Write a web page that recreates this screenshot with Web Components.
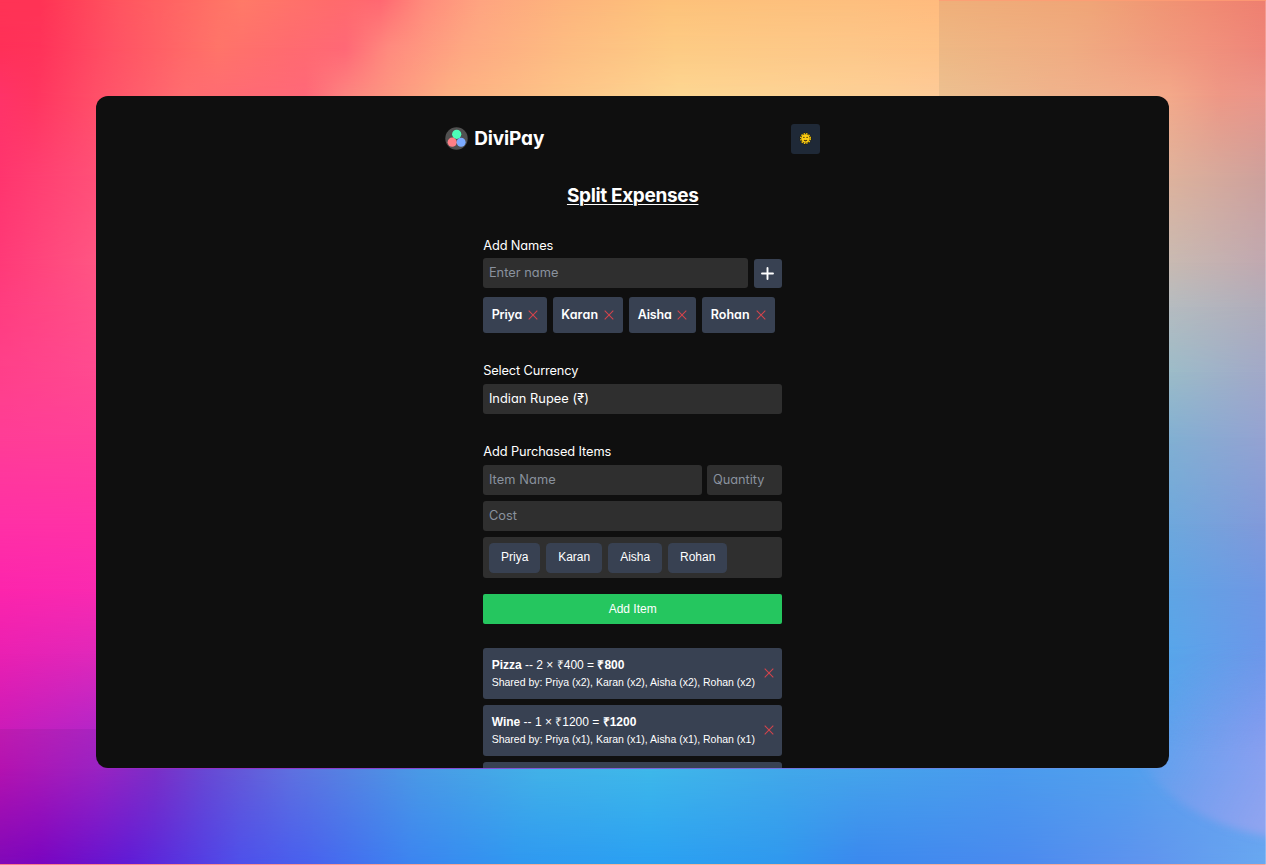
<!DOCTYPE html>
<html lang="en">
<head>
<meta charset="utf-8">
<title>DiviPay</title>
<style>
html,body{margin:0;width:1266px;height:865px;overflow:hidden}
body{font-family:"Liberation Sans",Arial,sans-serif;color:#fff}
</style>
</head>
<body>
<divi-stage>
  <divi-panel>
    <divi-header></divi-header>
    <divi-title><fit-text w="131.5">Split Expenses</fit-text></divi-title>
    <divi-form></divi-form>
  </divi-panel>
</divi-stage>
<script>
const define = (name, html, setup) => {
  const t = document.createElement('template');
  t.innerHTML = html;
  customElements.define(name, class extends HTMLElement {
    constructor() {
      super();
      this.attachShadow({mode: 'open'}).append(t.content.cloneNode(true));
    }
    connectedCallback() { if (setup) setup(this, this.shadowRoot); }
  });
};

define('divi-cross', `<style>:host{display:block;width:10px;height:10px;flex:none}svg{display:block}</style>
<svg width="10" height="10" viewBox="0 0 10 10"><path d="M.7.7l8.6 8.6M9.3.7L.7 9.3" stroke="#d4444c" stroke-width="1.05" fill="none"/></svg>`);

// Wallpaper: bands blended between the colour rows above and below them.
const top0 = '#ff3355 0,#ff3355 40px,#ff5560 120px,#ff7a68 242px,#ff6c6c 330px,#ff6872 380px,#ff8c7c 425px,#fea480 480px,#fdb47c 565px,#fdc27a 670px,#fdbf7e 850px,#ffbb7e 939px,#f0b07a 939px,#f0a577 1090px,#f18a72 1211px,#ef7f70 1266px';
const top48 = '#ff3058 0,#ff335a 40px,#ff5064 110px,#ff7469 218px,#ff6b70 290px,#ff6876 345px,#ff8a7e 388px,#fea882 465px,#fdbc82 565px,#fdcb84 675px,#fdc789 850px,#fec388 939px,#eeb884 939px,#f0ac82 1070px,#f1927c 1205px,#ee857a 1266px';
const top96 = '#ff3368 0,#ff3560 35px,#ff4f68 96px,#ff6d70 185px,#ff6878 305px,#fd8480 345px,#fdb083 450px,#fdc488 560px,#fdd692 680px,#fdd096 860px,#fdca98 939px,#ecc090 939px,#efb38c 1050px,#f3a98a 1169px,#ee9886 1220px,#ea958a 1266px';
const low0 = '#b412b0 0,#9a22c2 96px,#7c2ec8 155px,#6848d4 205px,#5f70e0 290px,#4a9ae6 420px,#42b2e8 540px,#3eb8ea 650px,#42a8ea 790px,#4a9bee 1000px,#52a0ee 1130px,#5ba2ee 1169px,#6a9ff0 1266px';
const low1 = '#8008b8 0,#7a05c0 40px,#5f1cd6 130px,#4e50ea 240px,#4862ee 310px,#3c84f0 410px,#2f98f0 520px,#2aa0f2 650px,#2f98ee 780px,#3b88ee 860px,#4b8aee 1020px,#6094ee 1150px,#68a8f0 1266px';
const mid = (a, b, c, d) => `${a} 0,${b} 96px,${c} 1169px,${d} 1266px`;
const bands = [
  [48, top0, top48],
  [48, top48, top96],
  [81, '#ff3368 0,#ff3560 35px,#ff4f68 96px,#f3a98a 1169px,#ee9886 1220px,#ea958a 1266px', mid('#ff356e','#ff5078','#deb29c','#cda09c')],
  [86, mid('#ff356e','#ff5078','#deb29c','#cda09c'), mid('#ff3a78','#ff5583','#c8bab2','#c0a8b0')],
  [44, mid('#ff3a78','#ff5583','#c8bab2','#c0a8b0'), mid('#ff3d80','#ff5088','#b5bcc0','#b0acba')],
  [65, mid('#ff3d80','#ff5088','#b5bcc0','#b0acba'), mid('#ff408a','#ff4a90','#9cbcc8','#a2a8c8')],
  [65, mid('#ff408a','#ff4a90','#9cbcc8','#a2a8c8'), mid('#ff3d96','#ff4098','#82b0d2','#95a2d2')],
  [87, mid('#ff3d96','#ff4098','#82b0d2','#95a2d2'), mid('#ff30a6','#ff32a6','#6ea8dc','#8299da')],
  [65, mid('#ff30a6','#ff32a6','#6ea8dc','#8299da'), mid('#fd25ac','#fa2ab0','#5fa5e4','#7097e4')],
  [65, mid('#fd25ac','#fa2ab0','#5fa5e4','#7097e4'), mid('#ea20b2','#e028ba','#58a6ea','#6c97ea')],
  [75, mid('#ea20b2','#e028ba','#58a6ea','#6c97ea'), mid('#cc1bb8','#b526c8','#5ba2ec','#7099ee')],
  [40, mid('#bf1bb0','#a924c0','#5ba2ec','#7099ee'), mid('#b412b0','#9a22c2','#5ba2ee','#6a9ff0')],
  [95, low0, low1]
];
define('divi-wallpaper', `<style>
:host{display:block;width:1266px;height:865px}
.band{display:grid}
.band i{grid-area:1/1;display:block}
.band i+i{-webkit-mask:linear-gradient(transparent,#000);mask:linear-gradient(transparent,#000)}
.foot{height:1px;background:linear-gradient(90deg,#f8788c,#f6b59a 50%,#f5a49a)}
svg{position:absolute;left:0;top:0}
</style><div class="bands"></div><div class="foot"></div>
<svg width="1266" height="865" viewBox="0 0 1266 865">
<defs><linearGradient id="g" gradientUnits="userSpaceOnUse" x1="1150" y1="725" x2="1275" y2="795"><stop offset="0" stop-color="#a09cf0" stop-opacity="0.04"/><stop offset="1" stop-color="#a8a4f0" stop-opacity=".6"/></linearGradient>
<linearGradient id="v" x1="0" y1="0" x2="0" y2="1"><stop offset="0" stop-color="#000"/><stop offset=".5" stop-color="#fff"/></linearGradient>
<mask id="m"><rect x="1100" y="640" width="166" height="225" fill="url(#v)"/></mask>
<filter id="b" x="-20%" y="-20%" width="140%" height="140%"><feGaussianBlur stdDeviation="4"/></filter></defs>
<g mask="url(#m)"><path d="M1300 640H1130V740Q1165 818 1266 836L1300 840Z" fill="url(#g)" filter="url(#b)"/></g>
<rect x="1265" width="1" height="865" fill="#fff" opacity=".22"/>
<rect x="939" width="327" height="1" fill="#ff9c74" opacity=".8"/>
</svg>`, (el, root) => {
  const box = root.querySelector('.bands');
  for (const [h, a, b] of bands) {
    const d = document.createElement('div');
    d.className = 'band';
    d.style.height = h + 'px';
    for (const c of [a, b]) {
      const i = document.createElement('i');
      i.style.background = `linear-gradient(90deg,${c})`;
      d.append(i);
    }
    box.append(d);
  }
});

define('divi-stage', `<style>
:host{display:grid;width:1266px;height:865px;overflow:hidden;position:relative}
divi-wallpaper{grid-area:1/1}
.content{grid-area:1/1;padding:96px;z-index:1}
</style><divi-wallpaper></divi-wallpaper><div class="content"><slot></slot></div>`);

define('divi-panel', `<style>
:host{display:flex;flex-direction:column;align-items:center;box-sizing:border-box;width:1073.4px;height:672.4px;padding-top:27.6px;background:#0f0f0f;border-radius:12px;overflow:hidden}
</style><slot></slot>`);

define('divi-header', `<style>
:host{display:flex;align-items:center;justify-content:space-between;width:375px;height:30px}
.brand{display:flex;align-items:center;gap:6px;font-size:19px;font-weight:700;line-height:30px}
svg{display:block}
button{all:unset;display:grid;place-items:center;width:29px;height:30px;border-radius:3px;background:#1f2937}
</style>
<div class="brand"><svg width="23" height="23" viewBox="0 0 23 23"><circle cx="11.5" cy="11.5" r="11.2" fill="#505050"/><circle cx="11.7" cy="7.3" r="4.6" fill="#4dffb8"/><circle cx="7.2" cy="15.2" r="4.6" fill="#ff7f86"/><circle cx="16.1" cy="15.2" r="4.5" fill="#7baaff"/></svg>
<fit-text w="70">DiviPay</fit-text></div>
<button aria-label="Toggle theme"><svg width="13" height="13" viewBox="0 0 13 13"><circle cx="6.5" cy="6.5" r="4.9" fill="none" stroke="#211b05" stroke-width="2.2" stroke-dasharray="1.55 1"/><circle cx="6.5" cy="6.5" r="4.8" fill="none" stroke="#f6c90e" stroke-width="1.4" stroke-dasharray="1.5 1.013"/><circle cx="6.5" cy="6.5" r="4.2" fill="#fccb12"/><circle cx="4.9" cy="5.4" r=".7" fill="#40300a"/><circle cx="8.1" cy="5.4" r=".7" fill="#40300a"/><path d="M5 8.2q1.5 1.3 3 0" stroke="#40300a" stroke-width="1.1" fill="none"/></svg></button>`);

define('divi-title', `<style>
:host{display:block;margin-top:28px;height:28px;line-height:28px;font-size:19px;font-weight:700}
::slotted(*){text-decoration:underline;text-decoration-thickness:1.4px;text-underline-offset:1.5px}
</style><slot></slot>`);

define('divi-label', `<style>
:host{display:block;height:20px;line-height:20px;font-size:12.8px;margin-bottom:2.5px}
</style><slot></slot>`);

define('divi-field', `<style>
:host{display:block;box-sizing:border-box;height:30px;padding-left:5.7px;line-height:29px;font-size:12.8px;color:#8a929e;background:#2f2f2f;border-radius:3px}
:host([filled]){color:#fff}
</style><slot></slot>`);

define('divi-name', `<style>
:host{display:flex;align-items:center;justify-content:space-between;box-sizing:border-box;height:36px;padding:0 9px 0 8.5px;background:#384152;border-radius:3px;font-size:12.5px;font-weight:600}
</style><slot></slot><divi-cross></divi-cross>`);

define('divi-person', `<style>
:host{display:block;box-sizing:border-box;height:30px;line-height:29px;text-align:center;font-size:12px;background:#384152;border-radius:4.5px}
</style><slot></slot>`);

define('divi-item', `<style>
:host{display:flex;align-items:center;justify-content:space-between;box-sizing:border-box;height:51px;padding:0 8.6px 0 8.5px;background:#384152;border-radius:3px;white-space:nowrap}
.line{font-size:12px;line-height:18px;height:18px}
.by{font-size:10.5px;line-height:16px;letter-spacing:-.01px}
</style><div><div class="line"><slot></slot></div><div class="by"><slot name="by"></slot></div></div><divi-cross></divi-cross>`);

define('divi-form', `<style>
:host{display:block;width:299px;margin-top:26.4px;flex:none}
.row{display:flex;align-items:center;gap:6px}
.plus{all:unset;width:28.5px;height:29px;border-radius:3px;background:#384152;display:grid;place-items:center}
.names{margin:8.5px 0 28.5px}
.group{margin-bottom:28.5px}
.people{box-sizing:border-box;height:41.5px;padding:6px;align-items:flex-start;background:#2f2f2f;border-radius:3px}
.stack{display:grid;gap:6px}
.add{all:unset;display:block;width:299px;height:30px;margin:15.7px 0 23.6px;line-height:28px;text-align:center;font-size:12px;background:#25c65f;border-radius:2px}
</style>
<divi-label><fit-text w="70">Add Names</fit-text></divi-label>
<div class="row"><divi-field style="width:265px"><fit-text w="69.5">Enter name</fit-text></divi-field>
<button class="plus" aria-label="Add name"><svg width="13" height="13" viewBox="0 0 13 13"><path d="M6.5 1v11M1 6.5h11" stroke="#fff" stroke-width="1.9" stroke-linecap="round"/></svg></button></div>
<div class="row names">
<divi-name style="width:63.5px"><fit-text w="30.5">Priya</fit-text></divi-name>
<divi-name style="width:70.5px"><fit-text w="37">Karan</fit-text></divi-name>
<divi-name style="width:67px"><fit-text w="34">Aisha</fit-text></divi-name>
<divi-name style="width:73px"><fit-text w="39">Rohan</fit-text></divi-name></div>
<div class="group"><divi-label><fit-text w="95">Select Currency</fit-text></divi-label>
<divi-field filled><fit-text w="100">Indian Rupee (₹)</fit-text></divi-field></div>
<divi-label><fit-text w="128">Add Purchased Items</fit-text></divi-label>
<div class="stack">
<div class="row" style="gap:5px"><divi-field style="width:219px"><fit-text w="67">Item Name</fit-text></divi-field><divi-field style="width:75px"><fit-text w="51.5">Quantity</fit-text></divi-field></div>
<divi-field><fit-text w="28">Cost</fit-text></divi-field>
<div class="row people"><divi-person style="width:51px">Priya</divi-person><divi-person style="width:56px">Karan</divi-person><divi-person style="width:54px">Aisha</divi-person><divi-person style="width:59px">Rohan</divi-person></div>
</div>
<button class="add">Add Item</button>
<div class="stack">
<divi-item><b>Pizza</b> -- 2 × ₹400 = <b>₹800</b><span slot="by">Shared by: Priya (x2), Karan (x2), Aisha (x2), Rohan (x2)</span></divi-item>
<divi-item><b>Wine</b> -- 1 × ₹1200 = <b>₹1200</b><span slot="by">Shared by: Priya (x1), Karan (x1), Aisha (x1), Rohan (x1)</span></divi-item>
<divi-item></divi-item>
</div>`);

// Text in the display face, tracked to a given width. Registered last, when
// every container around it already has its font size.
define('fit-text', `<style>
:host{display:inline-block;white-space:nowrap;font-family:Inter,"Open Sans",sans-serif;font-feature-settings:"cv11","ss03"}
</style><slot></slot>`, (el) => {
  const r = document.createRange();
  r.selectNodeContents(el);
  const w = r.getBoundingClientRect().width;
  const target = +el.getAttribute('w');
  if (target && w) el.style.letterSpacing = ((target - w) / el.textContent.length).toFixed(3) + 'px';
});
</script>
</body>
</html>
